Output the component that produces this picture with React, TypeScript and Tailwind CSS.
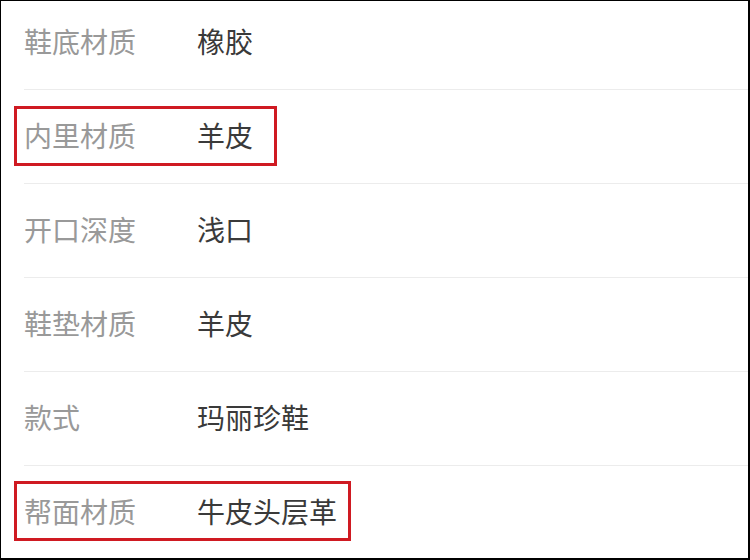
import React from "react";

const rows: { label: string; value: string; box?: number }[] = [
  { label: "鞋底材质", value: "橡胶" },
  { label: "内里材质", value: "羊皮", box: 263 },
  { label: "开口深度", value: "浅口" },
  { label: "鞋垫材质", value: "羊皮" },
  { label: "款式", value: "玛丽珍鞋" },
  { label: "帮面材质", value: "牛皮头层革", box: 337 },
];

export default function App() {
  return (
    <div
      className="w-[750px] h-[560px] bg-white border-black border-t border-l border-r-2 border-b-2 overflow-hidden"
      style={{ fontFamily: '"Noto Sans CJK SC", "Noto Sans", sans-serif' }}
    >
      <div className="-mt-[5px] flex flex-col">
        {rows.map((r, i) => (
          <div
            key={i}
            className="relative ml-[23px] h-[94px] shrink-0 flex items-center pb-[4px] border-b border-[#ececec]"
          >
            <div className="w-[173px] text-[28px] leading-none text-[#999999]">{r.label}</div>
            <div className="text-[28px] leading-none text-[#3a3a3a]">{r.value}</div>
            {r.box ? (
              <div
                className={`absolute left-[-10px] h-[60px] border-[3px] border-[#cf1a22] ${
                  i === 1 ? "top-[16px]" : "top-[15px]"
                }`}
                style={{ width: r.box }}
              />
            ) : null}
          </div>
        ))}
      </div>
    </div>
  );
}
